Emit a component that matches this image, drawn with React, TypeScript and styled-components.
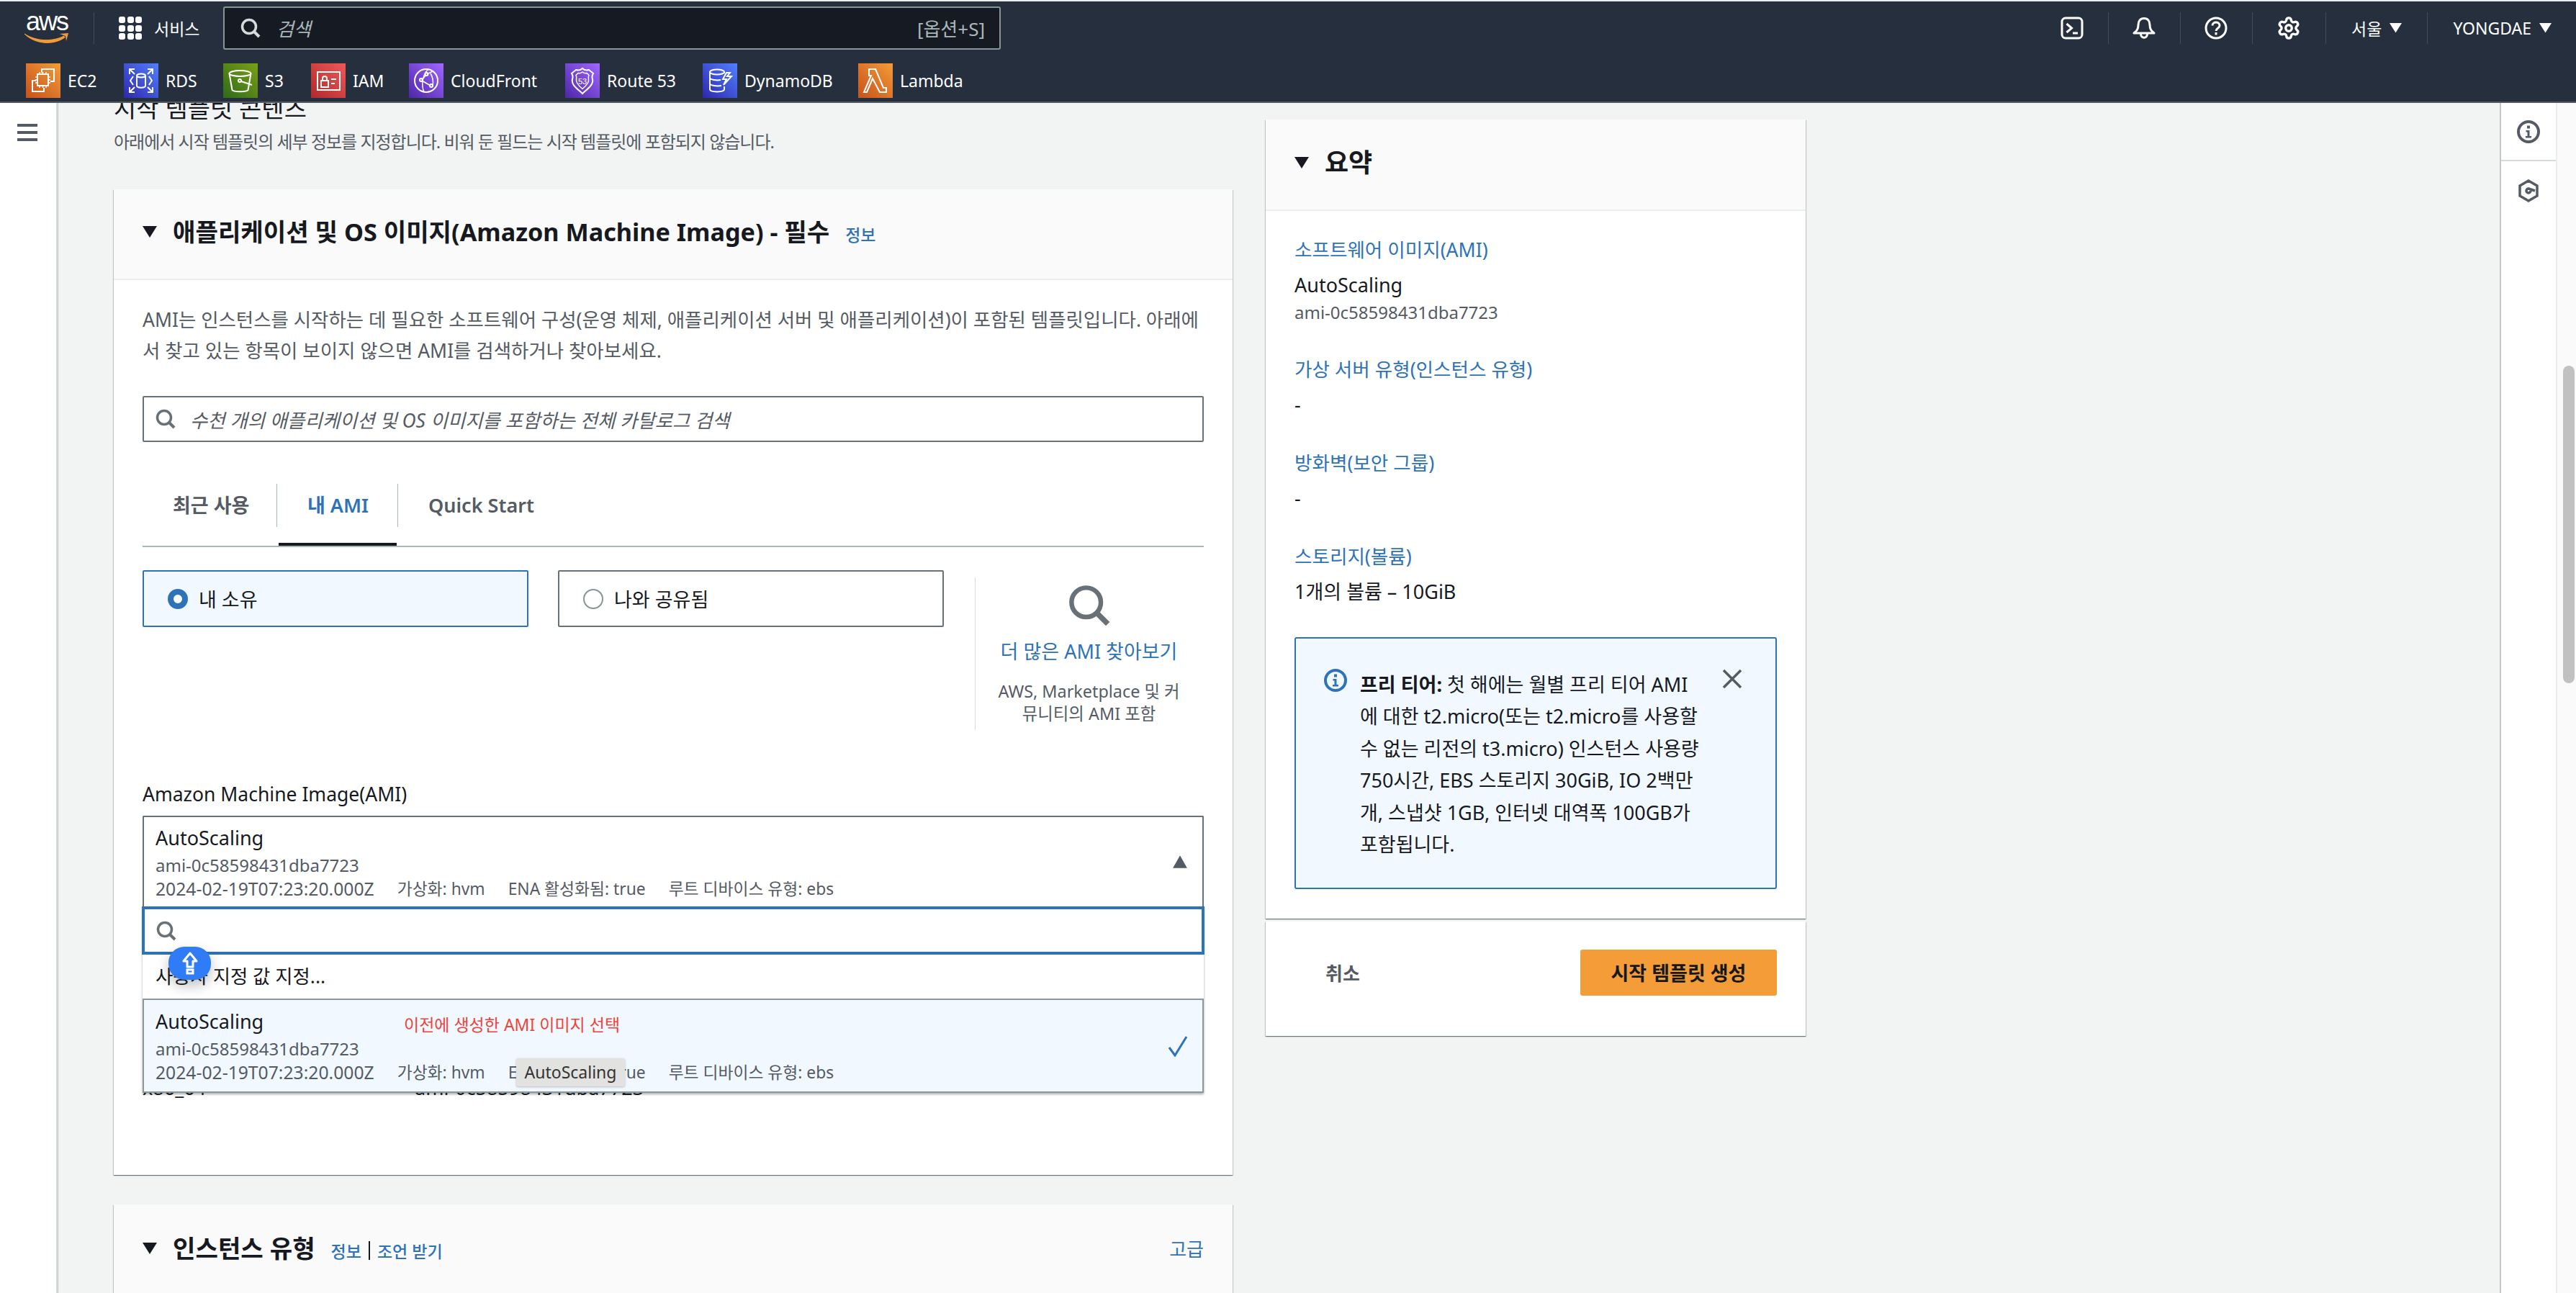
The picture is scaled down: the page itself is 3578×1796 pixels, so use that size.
import React from "react";
import styled, { createGlobalStyle } from "styled-components";
import { Settings } from "lucide-react";

const FONT = `"Noto Sans", "Noto Sans CJK KR", sans-serif`;
const BLUE = "#2e73b8";
const INK = "#16191f";
const MUTED = "#545b64";

const GlobalStyle = createGlobalStyle`
  html, body { margin: 0; padding: 0; height: 100%; background: #f2f3f3; }
  #root { height: 100%; }
  * { box-sizing: border-box; }
`;

const services = [
  { name: "EC2", w: 136, from: "#c8511b", to: "#f29c38", kind: "ec2" },
  { name: "RDS", w: 138, from: "#2e27ad", to: "#527fff", kind: "rds" },
  { name: "S3", w: 122, from: "#2f6a1a", to: "#7aa116", kind: "s3" },
  { name: "IAM", w: 136, from: "#b02a2a", to: "#f05858", kind: "iam" },
  { name: "CloudFront", w: 217, from: "#4d27a8", to: "#a166ff", kind: "cf" },
  { name: "Route 53", w: 191, from: "#4d27a8", to: "#a166ff", kind: "r53" },
  { name: "DynamoDB", w: 216, from: "#2e27ad", to: "#527fff", kind: "ddb" },
  { name: "Lambda", w: 140, from: "#c8511b", to: "#f29c38", kind: "lambda" },
];

const ServiceGlyph = ({ kind }: { kind: string }) => {
  const p = { fill: "none", stroke: "#fff", strokeWidth: 2 };
  return (
    <svg width="48" height="48" viewBox="0 0 48 48">
      {kind === "ec2" && (
        <g {...p}>
          <path d="M22 13V8h17v17h-5" />
          <path d="M14 24H9v15h16v-5" />
          <rect x="16" y="15" width="15" height="16" />
          <path d="M19 12v3M23.500 12v3M28 12v3M19 31v3M23.500 31v3M28 31v3M13 19h3M13 23h3M13 27h3M31 19h3M31 23h3M31 27h3" strokeWidth="1.500" />
        </g>
      )}
      {kind === "rds" && (
        <g {...p}>
          <ellipse cx="24" cy="17" rx="6" ry="2.500" />
          <path d="M18 17v14c0 3.500 12 3.500 12 0V17" />
          <path d="M13 18l-4 6 4 6M35 18l4 6-4 6" />
          <path d="M8 15V8h7M8 8l7 7M40 15V8h-7M40 8l-7 7M8 33v7h7M8 40l7-7M40 33v7h-7M40 40l-7-7" />
        </g>
      )}
      {kind === "s3" && (
        <g {...p}>
          <ellipse cx="23.500" cy="14" rx="15" ry="4" />
          <path d="M8.500 14l4 23c2 3 20 3 22 0l4-23" />
          <circle cx="23" cy="24" r="2" />
          <path d="M25 25l15 5" />
        </g>
      )}
      {kind === "iam" && (
        <g {...p}>
          <rect x="9" y="12" width="31" height="25" />
          <rect x="14" y="24" width="10" height="9" />
          <path d="M16 24v-3c0-4 6-4 6 0v3M28 22h7M28 28h5" />
        </g>
      )}
      {kind === "cf" && (
        <g {...p}>
          <circle cx="24" cy="24" r="16" />
          <path d="M27 8c-7 6-11 20-6 32M25 15l8-4M18 23l6-7M18 24l12 7M33 31c1-5 0-12-3-17" strokeWidth="1.500" />
          <circle cx="24.500" cy="15" r="2" />
          <circle cx="17" cy="23" r="2" />
          <circle cx="31" cy="31" r="2" />
        </g>
      )}
      {kind === "r53" && (
        <g {...p}>
          <path d="M24 7c3 3 6 3 9 2l6 5c-2 3-2 5-1 8 2 8-8 14-14 20-6-6-16-12-14-20 1-3 1-5-1-8l6-5c3 1 6 1 9-2z" />
          <path d="M24 12c2 1.500 4 2 6 1.500l3 3c-1 2-1 4-.5 6 1 5-5 10-8.500 13-3.500-3-9.500-8-8.500-13 .5-2 .5-4-.5-6l3-3c2 .5 4 0 6-1.500z" strokeWidth="1.500" />
          <text x="24" y="29" fontSize="11" textAnchor="middle" fill="#fff" stroke="none" fontFamily="Liberation Sans">53</text>
        </g>
      )}
      {kind === "ddb" && (
        <g {...p}>
          <ellipse cx="20" cy="12" rx="10" ry="3.500" />
          <path d="M10 12v24c0 4.500 20 4.500 20 0v-4M10 20c0 3 10 4 15 3M10 28c0 3 10 4 16 3M30 12v2" />
          <path d="M33 13l-5 9h5l-4 8 11-12h-6l4-5z" />
        </g>
      )}
      {kind === "lambda" && (
        <g {...p}>
          <path d="M15 8h9l11 26h4v6h-9L20 21l-8 19H8l10-23h-3z" />
        </g>
      )}
    </svg>
  );
};

const SearchIcon = ({ size = 28, color = "#687078", stroke = 3.5 }: { size?: number; color?: string; stroke?: number }) => (
  <svg width={size} height={size} viewBox="0 0 28 28" fill="none" stroke={color} strokeWidth={stroke}>
    <circle cx="12" cy="12" r="9.500" />
    <path d="M18.500 18.500L26 26" strokeWidth={stroke + 0.5} />
  </svg>
);

const Caret = ({ color = INK, size = 20, up = false }: { color?: string; size?: number; up?: boolean }) => (
  <svg width={size} height={size * 0.8} viewBox="0 0 20 16">
    <path d={up ? "M10 0l9 16H1z" : "M0 0h20l-10 16z"} fill={color} />
  </svg>
);

const Page = styled.div`
  height: 1796px;
  width: 3578px;
  display: flex;
  flex-direction: column;
  overflow: hidden;
  font-family: ${FONT};
  color: ${INK};
  background: #f2f3f3;
  border-top: 2px solid #eaeded;
`;

const Header = styled.header`
  height: 141px;
  flex: none;
  background: #252f3e;
  border-bottom: 2px solid #545b64;
  color: #fff;
`;

const TopRow = styled.div`
  height: 74px;
  display: flex;
  align-items: center;
  padding: 0 34px 0 33px;
`;

const Logo = styled.div`
  width: 64px;
  height: 46px;
  margin-right: 33px;
`;

const LogoWord = styled.span`
  display: block;
  font: 400 36px/28px "Liberation Sans", sans-serif;
  letter-spacing: -2px;
  text-align: center;
  color: #fff;
`;

const LogoSmile = styled.svg`
  display: block;
  margin-top: 0;
`;

const VSep = styled.div`
  width: 1px;
  height: 44px;
  background: #414b5a;
  flex: none;
`;

const ServicesBtn = styled.div`
  display: flex;
  align-items: center;
  gap: 17px;
  margin-left: 34px;
  width: 145px;
  font-size: 23px;
`;

const Dots = styled.div`
  display: grid;
  grid-template-columns: repeat(3, 9px);
  grid-auto-rows: 9px;
  gap: 2.5px;
  span { background: #fff; border-radius: 3px; }
`;

const GlobalSearch = styled.div`
  width: 1080px;
  height: 60px;
  background: #161b23;
  border: 2px solid #879596;
  border-radius: 3px;
  display: flex;
  align-items: center;
  padding: 0 20px 0 22px;
  color: #aab7b8;
  font-size: 26px;
`;

const SearchHint = styled.span`
  font-style: italic;
  margin-left: 22px;
  flex: 1;
`;

const RightTools = styled.div`
  margin-left: auto;
  display: flex;
  align-items: center;
`;

const ToolItem = styled.div<{ $text?: boolean }>`
  height: 44px;
  display: flex;
  align-items: center;
  gap: 11px;
  padding: ${(p) => (p.$text ? "0 35px" : "0 34px 0 33px")};
  border-right: 1px solid #414b5a;
  font-size: 23px;
  color: #fff;
  &:last-child { border-right: none; padding-right: 0; }
`;

const ServiceRow = styled.div`
  height: 48px;
  margin-top: 12px;
  display: flex;
  padding-left: 36px;
`;

const ServiceItem = styled.div<{ $w: number }>`
  width: ${(p) => p.$w}px;
  display: flex;
  align-items: center;
  gap: 10px;
  font-size: 23px;
`;

const ServiceBadge = styled.div<{ $from: string; $to: string }>`
  width: 48px;
  height: 48px;
  background: linear-gradient(45deg, ${(p) => p.$from}, ${(p) => p.$to});
`;

const Body = styled.div`
  flex: 1;
  display: flex;
  min-height: 0;
`;

const LeftNav = styled.nav`
  width: 80px;
  flex: none;
  background: #fff;
  border-right: 2px solid #d5dbdb;
  box-shadow: 1px 0 1px rgba(0, 28, 36, 0.15);
  padding: 29px 0 0 24px;
`;

const Burger = styled.div`
  width: 28px;
  display: flex;
  flex-direction: column;
  gap: 6px;
  span { height: 4px; background: ${MUTED}; }
`;

const Main = styled.main`
  flex: 1;
  display: flex;
  gap: 46px;
  padding-left: 78px;
  overflow: hidden;
`;

const LeftCol = styled.div`
  width: 1554px;
  flex: none;
`;

const RightCol = styled.div`
  width: 750px;
  flex: none;
  margin-top: 23px;
  display: flex;
  flex-direction: column;
  gap: 4px;
`;

const PageTitle = styled.h1`
  margin: -15px 0 0;
  font-size: 34px;
  line-height: 44px;
  font-weight: 400;
`;

const PageDesc = styled.p`
  margin: 5px 0 0;
  font-size: 24px;
  letter-spacing: -1px;
  line-height: 40px;
  color: ${MUTED};
`;

const Card = styled.section<{ $mt?: number }>`
  background: #fff;
  margin-top: ${(p) => p.$mt ?? 0}px;
  box-shadow: 0 1px 1px rgba(0, 28, 36, 0.4), 1px 1px 1px rgba(0, 28, 36, 0.15), -1px 1px 1px rgba(0, 28, 36, 0.15);
`;

const CardHead = styled.div<{ $h: number }>`
  height: ${(p) => p.$h}px;
  background: #fafafa;
  border-bottom: 2px solid #eaeded;
  display: flex;
  align-items: center;
  padding: 0 40px 6px;
`;

const CardTitle = styled.h2<{ $big?: boolean }>`
  margin: 0 0 0 22px;
  font-size: ${(p) => (p.$big ? 36 : 34.2)}px;
  line-height: 44px;
  font-weight: 700;
  color: ${INK};
`;

const InfoLink = styled.a`
  color: ${BLUE};
  font-size: 23px;
  font-weight: 500;
`;

const CardBody = styled.div`
  padding: 34px 40px 101px;
`;

const Intro = styled.p`
  margin: 0;
  font-size: 26.47px;
  line-height: 43px;
  color: ${MUTED};
  white-space: nowrap;
`;

const CatalogSearch = styled.div`
  margin-top: 41px;
  height: 64px;
  border: 2px solid #687078;
  border-radius: 2px;
  display: flex;
  align-items: center;
  gap: 20px;
  padding: 0 16px;
  font-size: 26.4px;
  font-style: italic;
  color: ${MUTED};
`;

const TabList = styled.div`
  margin-top: 58px;
  height: 88px;
  display: flex;
  border-bottom: 2px solid #aab7b8;
`;

const Tab = styled.div<{ $active?: boolean }>`
  display: flex;
  flex-direction: column;
  font-size: 27px;
  font-weight: 600;
  color: ${(p) => (p.$active ? BLUE : MUTED)};
  &::after {
    content: "";
    height: 4px;
    margin: 22px 2px 0;
    background: ${(p) => (p.$active ? INK : "transparent")};
  }
`;

const TabLabel = styled.div<{ $w?: number }>`
  height: 60px;
  line-height: 60px;
  width: ${(p) => (p.$w ? `${p.$w}px` : "auto")};
  padding-left: 42px;
  border-right: 1px solid ${(p) => (p.$w ? "#aab7b8" : "transparent")};
`;

const SourceRow = styled.div`
  margin-top: 32px;
  display: flex;
  align-items: flex-start;
`;

const Tile = styled.div<{ $on?: boolean }>`
  width: 536px;
  height: 79px;
  margin-right: 41px;
  display: flex;
  align-items: center;
  gap: 15px;
  padding-left: 33px;
  font-size: 27px;
  border: 2px solid ${(p) => (p.$on ? BLUE : "#687078")};
  background: ${(p) => (p.$on ? "#f1f8ff" : "#fff")};
  border-radius: 2px;
`;

const Radio = styled.span<{ $on?: boolean }>`
  width: 28px;
  height: 28px;
  border-radius: 50%;
  background: #fff;
  border: ${(p) => (p.$on ? `8px solid ${BLUE}` : "2px solid #879596")};
  flex: none;
`;

const BrowseBox = styled.div`
  width: 316px;
  height: 212px;
  margin: 10px 0 0 2px;
  border-left: 1px solid #d5dbdb;
  padding-top: 9px;
  display: flex;
  flex-direction: column;
  align-items: center;
`;

const BrowseLink = styled.a`
  margin-top: 14px;
  color: ${BLUE};
  font-size: 27px;
  line-height: 40px;
`;

const BrowseNote = styled.div`
  margin-top: 20px;
  color: ${MUTED};
  font-size: 23.4px;
  line-height: 31px;
  text-align: center;
`;

const FieldLabel = styled.div`
  margin-top: 69px;
  font-size: 26.5px;
  line-height: 40px;
`;

const SelectWrap = styled.div`
  margin-top: 10px;
  position: relative;
`;

const SelectBox = styled.div`
  height: 126px;
  border: 2px solid #687078;
  border-bottom: none;
  border-radius: 2px 2px 0 0;
  padding: 9px 16px 0;
  position: relative;
`;

const OptName = styled.div`
  font-size: 27px;
  line-height: 40px;
`;

const OptId = styled.div`
  font-size: 24px;
  line-height: 36px;
  color: ${MUTED};
`;

const OptTags = styled.div`
  display: flex;
  gap: 32px;
  font-size: 22.8px;
  line-height: 30px;
  color: ${MUTED};
`;

const OptDate = styled.span`
  font-size: 24.7px;
`;

const SideMark = styled.div`
  position: absolute;
  right: 20px;
  top: 50%;
  transform: translateY(-50%);
  display: flex;
`;

const Dropdown = styled.div`
  position: absolute;
  left: 0;
  right: 0;
  top: 126px;
  background: #fff;
  box-shadow: 0 2px 3px rgba(0, 28, 36, 0.35);
  z-index: 2;
`;

const FilterInput = styled.div`
  height: 67px;
  margin: 0 -1px;
  border: 4px solid ${BLUE};
  display: flex;
  align-items: center;
  padding: 0 16px;
`;

const CustomRow = styled.div`
  height: 61px;
  padding-left: 18px;
  font-size: 26.4px;
  line-height: 61px;
`;

const SelectedOption = styled.div`
  height: 131px;
  position: relative;
  background: #f1f8ff;
  border: 2px solid #8d9699;
  padding: 10px 16px 0;
`;

const RedNote = styled.span`
  position: absolute;
  left: 361px;
  top: 14px;
  font-size: 23px;
  line-height: 40px;
  color: #f0433a;
`;

const Tip = styled.div`
  position: absolute;
  left: 517px;
  top: 81px;
  width: 151px;
  height: 39px;
  background: #e2e2e0;
  border-radius: 3px;
  box-shadow: 0 1px 3px rgba(0, 0, 0, 0.25);
  font-size: 23px;
  line-height: 39px;
  text-align: center;
  color: #333;
`;

const Bubble = styled.div`
  position: absolute;
  left: 36px;
  top: 56px;
  width: 59px;
  height: 46px;
  border-radius: 22px;
  background: #2f7cf6;
  box-shadow: 0 8px 18px rgba(0, 0, 0, 0.25);
  display: flex;
  align-items: center;
  justify-content: center;
`;

const HiddenRow = styled.div`
  margin-top: 232px;
  display: flex;
  font-size: 27px;
  line-height: 40px;
`;

const HiddenArch = styled.span`
  width: 378px;
`;

const CardSecondHead = styled(CardHead)`
  padding-bottom: 76px;
`;

const LinkRow = styled.div`
  margin-left: 22px;
  display: flex;
  align-items: center;
  gap: 10px;
  margin-top: 6px;
`;

const Pipe = styled.span`
  width: 2px;
  height: 26px;
  background: ${INK};
`;

const AdvLink = styled.a`
  margin-left: auto;
  color: ${BLUE};
  font-size: 26px;
`;

const SummaryBody = styled.div`
  padding: 34px 40px 41px;
`;

const SumItem = styled.div`
  margin-bottom: 41px;
`;

const SumLabel = styled.a`
  display: block;
  color: ${BLUE};
  font-size: 26.6px;
  line-height: 40px;
`;

const SumValue = styled.div`
  margin-top: 9px;
  font-size: 27px;
  line-height: 40px;
`;

const SumSub = styled.div`
  font-size: 24px;
  line-height: 36px;
  color: ${MUTED};
`;

const Alert = styled.div`
  height: 350px;
  border: 2px solid ${BLUE};
  border-radius: 3px;
  background: #f1f8ff;
  padding: 42px 0 0 39px;
  display: flex;
  margin-top: 43px;
`;

const AlertIcon = styled.div`
  width: 50px;
  flex: none;
`;

const AlertText = styled.p`
  margin: 0;
  width: 503px;
  flex: none;
  font-size: 27px;
  line-height: 44.4px;
  white-space: nowrap;
`;

const Footer = styled.div`
  height: 159px;
  display: flex;
  align-items: center;
  justify-content: space-between;
  padding: 0 40px 18px 83px;
`;

const CancelBtn = styled.span`
  font-size: 26px;
  font-weight: 700;
  color: ${MUTED};
`;

const CreateBtn = styled.div`
  width: 273px;
  height: 64px;
  background: #f39c38;
  border-radius: 3px;
  display: flex;
  align-items: center;
  justify-content: center;
  font-size: 27px;
  font-weight: 700;
  color: ${INK};
`;

const ToolPanel = styled.aside`
  width: 80px;
  flex: none;
  background: #fff;
  border-left: 2px solid #c4c8c8;
  border-right: 2px solid #eaeded;
`;

const ToolBtn = styled.div<{ $h: number }>`
  height: ${(p) => p.$h}px;
  display: flex;
  align-items: center;
  justify-content: center;
  border-bottom: ${(p) => (p.$h < 82 ? "2px solid #d5dbdb" : "none")};
`;

const Scrollbar = styled.div`
  width: 26px;
  flex: none;
  background: #fafafa;
  padding: 365px 2px 0 8px;
`;

const ScrollThumb = styled.div`
  height: 441px;
  border-radius: 8px;
  background: #c1c1c1;
`;

const InfoCircle = ({ color, size }: { color: string; size: number }) => (
  <svg width={size} height={size} viewBox="0 0 32 32" fill="none">
    <circle cx="16" cy="16" r="14" stroke={color} strokeWidth="4" />
    <rect x="14" y="7.500" width="4" height="4" fill={color} />
    <path d="M12.500 14h5v8h2.500v2.500h-8V22h2.500v-5.500h-2z" fill={color} />
  </svg>
);

const AmiOptionText = () => (
  <>
    <OptName>AutoScaling</OptName>
    <OptId>ami-0c58598431dba7723</OptId>
    <OptTags>
      <OptDate>2024-02-19T07:23:20.000Z</OptDate>
      <span>가상화: hvm</span>
      <span>ENA 활성화됨: true</span>
      <span>루트 디바이스 유형: ebs</span>
    </OptTags>
  </>
);

export default function App() {
  return (
    <Page>
      <GlobalStyle />
      <Header>
        <TopRow>
          <Logo>
            <LogoWord>aws</LogoWord>
            <LogoSmile width="64" height="18" viewBox="0 0 64 18">
              <path d="M1 3C18 14 40 14 56 6l1 2C42 19 16 18 1 3z" fill="#f29c38" stroke="#f29c38" strokeWidth="1" />
              <path d="M50 3l12-1-3 11-1-7z" fill="#f29c38" />
            </LogoSmile>
          </Logo>
          <VSep />
          <ServicesBtn>
            <Dots>
              {Array.from({ length: 9 }).map((_, i) => (
                <span key={i} />
              ))}
            </Dots>
            서비스
          </ServicesBtn>
          <GlobalSearch>
            <SearchIcon size={28} color="#d5dbdb" />
            <SearchHint>검색</SearchHint>
            [옵션+S]
          </GlobalSearch>
          <RightTools>
            <ToolItem>
              <svg width="32" height="32" viewBox="0 0 32 32" fill="none" stroke="#fff" strokeWidth="3">
                <rect x="2" y="2" width="28" height="28" rx="5" />
                <path d="M8.500 10l7 6-7 6M17 23h7" />
              </svg>
            </ToolItem>
            <ToolItem>
              <svg width="32" height="32" viewBox="0 0 32 32" fill="none" stroke="#fff" strokeWidth="3">
                <path d="M16 2.500c-5.500 0-8 4-8 9 0 6-2 8-6 11.500h28c-4-3.500-6-5.500-6-11.500 0-5-2.500-9-8-9z" strokeLinejoin="round" />
                <path d="M11.500 24c0 7 9 7 9 0" />
              </svg>
            </ToolItem>
            <ToolItem>
              <svg width="32" height="32" viewBox="0 0 32 32" fill="none" stroke="#fff" strokeWidth="3">
                <circle cx="16" cy="16" r="14" />
                <path d="M11 12.500c0-6 10-6 10 0 0 4-5 3.500-5 7.500" />
                <path d="M16 22v3.500" />
              </svg>
            </ToolItem>
            <ToolItem>
              <Settings size={34} color="#fff" strokeWidth={2.4} />
            </ToolItem>
            <ToolItem $text>
              서울 <Caret color="#fff" size={17} />
            </ToolItem>
            <ToolItem $text>
              YONGDAE <Caret color="#fff" size={17} />
            </ToolItem>
          </RightTools>
        </TopRow>
        <ServiceRow>
          {services.map((s) => (
            <ServiceItem key={s.name} $w={s.w}>
              <ServiceBadge $from={s.from} $to={s.to}>
                <ServiceGlyph kind={s.kind} />
              </ServiceBadge>
              {s.name}
            </ServiceItem>
          ))}
        </ServiceRow>
      </Header>

      <Body>
        <LeftNav>
          <Burger>
            <span />
            <span />
            <span />
          </Burger>
        </LeftNav>
        <Main>
          <LeftCol>
            <PageTitle>시작 템플릿 콘텐츠</PageTitle>
            <PageDesc>아래에서 시작 템플릿의 세부 정보를 지정합니다. 비워 둔 필드는 시작 템플릿에 포함되지 않습니다.</PageDesc>

            <Card $mt={46}>
              <CardHead $h={126}>
                <Caret />
                <CardTitle>애플리케이션 및 OS 이미지(Amazon Machine Image) - 필수</CardTitle>
                <LinkRow>
                  <InfoLink>정보</InfoLink>
                </LinkRow>
              </CardHead>
              <CardBody>
                <Intro>
                  AMI는 인스턴스를 시작하는 데 필요한 소프트웨어 구성(운영 체제, 애플리케이션 서버 및 애플리케이션)이 포함된 템플릿입니다. 아래에
                  <br />
                  서 찾고 있는 항목이 보이지 않으면 AMI를 검색하거나 찾아보세요.
                </Intro>
                <CatalogSearch>
                  <SearchIcon />
                  수천 개의 애플리케이션 및 OS 이미지를 포함하는 전체 카탈로그 검색
                </CatalogSearch>
                <TabList>
                  <Tab>
                    <TabLabel $w={187}>최근 사용</TabLabel>
                  </Tab>
                  <Tab $active>
                    <TabLabel $w={168}>내 AMI</TabLabel>
                  </Tab>
                  <Tab>
                    <TabLabel>Quick Start</TabLabel>
                  </Tab>
                </TabList>
                <SourceRow>
                  <Tile $on>
                    <Radio $on />내 소유
                  </Tile>
                  <Tile>
                    <Radio />
                    나와 공유됨
                  </Tile>
                  <BrowseBox>
                    <SearchIcon size={60} stroke={3} />
                    <BrowseLink>더 많은 AMI 찾아보기</BrowseLink>
                    <BrowseNote>
                      AWS, Marketplace 및 커
                      <br />
                      뮤니티의 AMI 포함
                    </BrowseNote>
                  </BrowseBox>
                </SourceRow>
                <FieldLabel>Amazon Machine Image(AMI)</FieldLabel>
                <SelectWrap>
                  <SelectBox>
                    <AmiOptionText />
                    <SideMark>
                      <Caret up color={MUTED} size={22} />
                    </SideMark>
                  </SelectBox>
                  <Dropdown>
                    <FilterInput>
                      <SearchIcon />
                    </FilterInput>
                    <CustomRow>사용자 지정 값 지정...</CustomRow>
                    <SelectedOption>
                      <AmiOptionText />
                      <RedNote>이전에 생성한 AMI 이미지 선택</RedNote>
                      <Tip>AutoScaling</Tip>
                      <SideMark>
                        <svg width="28" height="30" viewBox="0 0 28 30" fill="none" stroke={BLUE} strokeWidth="3">
                          <path d="M2 17l8 11L26 2" />
                        </svg>
                      </SideMark>
                    </SelectedOption>
                    <Bubble>
                      <svg width="22" height="32" viewBox="0 0 22 32" fill="none" stroke="#fff" strokeWidth="3">
                        <path d="M11 2L2 13h5v8h8v-8h5z" strokeLinejoin="round" />
                        <rect x="7" y="25" width="8" height="5" />
                      </svg>
                    </Bubble>
                  </Dropdown>
                  <HiddenRow>
                    <HiddenArch>x86_64</HiddenArch>
                    <span>ami-0c58598431dba7723</span>
                  </HiddenRow>
                </SelectWrap>
              </CardBody>
            </Card>

            <Card $mt={41}>
              <CardSecondHead $h={200}>
                <Caret />
                <CardTitle>인스턴스 유형</CardTitle>
                <LinkRow>
                  <InfoLink>정보</InfoLink>
                  <Pipe />
                  <InfoLink>조언 받기</InfoLink>
                </LinkRow>
                <AdvLink>고급</AdvLink>
              </CardSecondHead>
            </Card>
          </LeftCol>

          <RightCol>
            <Card>
              <CardHead $h={127}>
                <Caret />
                <CardTitle $big>요약</CardTitle>
              </CardHead>
              <SummaryBody>
                <SumItem>
                  <SumLabel>소프트웨어 이미지(AMI)</SumLabel>
                  <SumValue>AutoScaling</SumValue>
                  <SumSub>ami-0c58598431dba7723</SumSub>
                </SumItem>
                <SumItem>
                  <SumLabel>가상 서버 유형(인스턴스 유형)</SumLabel>
                  <SumValue>-</SumValue>
                </SumItem>
                <SumItem>
                  <SumLabel>방화벽(보안 그룹)</SumLabel>
                  <SumValue>-</SumValue>
                </SumItem>
                <SumLabel>스토리지(볼륨)</SumLabel>
                <SumValue>1개의 볼륨 – 10GiB</SumValue>
                <Alert>
                  <AlertIcon>
                    <InfoCircle color={BLUE} size={32} />
                  </AlertIcon>
                  <AlertText>
                    <b>프리 티어:</b> 첫 해에는 월별 프리 티어 AMI
                    <br />
                    에 대한 t2.micro(또는 t2.micro를 사용할
                    <br />수 없는 리전의 t3.micro) 인스턴스 사용량
                    <br />
                    750시간, EBS 스토리지 30GiB, IO 2백만
                    <br />
                    개, 스냅샷 1GB, 인터넷 대역폭 100GB가
                    <br />
                    포함됩니다.
                  </AlertText>
                  <svg width="28" height="28" viewBox="0 0 28 28" stroke={MUTED} strokeWidth="3.500">
                    <path d="M2 2l24 24M26 2L2 26" />
                  </svg>
                </Alert>
              </SummaryBody>
            </Card>
            <Card>
              <Footer>
                <CancelBtn>취소</CancelBtn>
                <CreateBtn>시작 템플릿 생성</CreateBtn>
              </Footer>
            </Card>
          </RightCol>
        </Main>
        <ToolPanel>
          <ToolBtn $h={81}>
            <InfoCircle color={MUTED} size={32} />
          </ToolBtn>
          <ToolBtn $h={82}>
            <svg width="32" height="32" viewBox="0 0 32 32" fill="none" stroke={MUTED} strokeWidth="3.500">
              <path d="M16 2l12 7v14l-12 7-12-7V9z" />
              <path d="M16 13l9 3M13 16a3 3 0 106 0 3 3 0 10-6 0" />
            </svg>
          </ToolBtn>
        </ToolPanel>
        <Scrollbar>
          <ScrollThumb />
        </Scrollbar>
      </Body>
    </Page>
  );
}
